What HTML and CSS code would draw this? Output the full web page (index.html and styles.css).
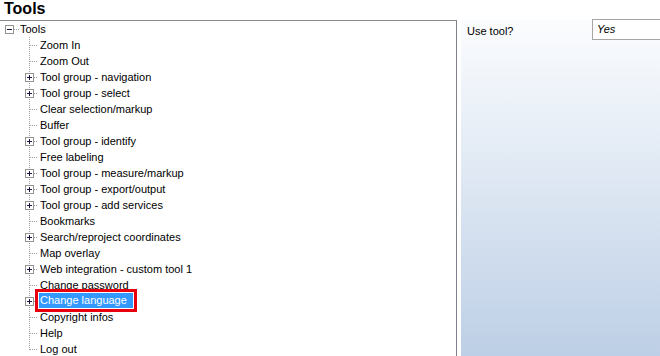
FILE: index.html
```html
<!DOCTYPE html>
<html>
<head>
<meta charset="utf-8">
<title>Tools</title>
<link rel="stylesheet" href="styles.css">
</head>
<body>
<div class="title">Tools</div>
<div class="main">
  <div class="tree">
    <div class="row root"><span class="rgutter"><span class="exp minus"></span></span><span class="label">Tools</span></div>
    <div class="row"><span class="gutter"></span><span class="label">Zoom In</span></div>
    <div class="row"><span class="gutter"></span><span class="label">Zoom Out</span></div>
    <div class="row"><span class="gutter"><span class="exp"></span></span><span class="label">Tool group - navigation</span></div>
    <div class="row"><span class="gutter"><span class="exp"></span></span><span class="label">Tool group - select</span></div>
    <div class="row"><span class="gutter"></span><span class="label">Clear selection/markup</span></div>
    <div class="row"><span class="gutter"></span><span class="label">Buffer</span></div>
    <div class="row"><span class="gutter"><span class="exp"></span></span><span class="label">Tool group - identify</span></div>
    <div class="row"><span class="gutter"></span><span class="label">Free labeling</span></div>
    <div class="row"><span class="gutter"><span class="exp"></span></span><span class="label">Tool group - measure/markup</span></div>
    <div class="row"><span class="gutter"><span class="exp"></span></span><span class="label">Tool group - export/output</span></div>
    <div class="row"><span class="gutter"><span class="exp"></span></span><span class="label">Tool group - add services</span></div>
    <div class="row"><span class="gutter"></span><span class="label">Bookmarks</span></div>
    <div class="row"><span class="gutter"><span class="exp"></span></span><span class="label">Search/reproject coordinates</span></div>
    <div class="row"><span class="gutter"></span><span class="label">Map overlay</span></div>
    <div class="row"><span class="gutter"><span class="exp"></span></span><span class="label">Web integration - custom tool 1</span></div>
    <div class="row"><span class="gutter"></span><span class="label">Change password</span></div>
    <div class="row"><span class="gutter"><span class="exp"></span></span><span class="label sel">Change language</span></div>
    <div class="row"><span class="gutter"></span><span class="label">Copyright infos</span></div>
    <div class="row"><span class="gutter"></span><span class="label">Help</span></div>
    <div class="row"><span class="gutter last"></span><span class="label">Log out</span></div>
  </div>
  <div class="props">
    <div class="prop">
      <span class="plabel">Use tool?</span>
      <span class="pvalue">Yes</span>
    </div>
  </div>
</div>
</body>
</html>
```
FILE: styles.css
```css
html, body {
  margin: 0;
  padding: 0;
  background: #fff;
  overflow: hidden;
}
body {
  width: 660px;
  height: 356px;
  font-family: "Liberation Sans", Arial, sans-serif;
  font-size: 11px;
  color: #000;
}
.title {
  height: 20px;
  padding-left: 4px;
  font-size: 16px;
  font-weight: bold;
  line-height: 18px;
}
.main {
  display: flex;
  height: 336px;
}
.tree {
  width: 456px;
  flex: none;
  border-top: 1px solid #8a8a8a;
  border-right: 1px solid #80808a;
  box-sizing: content-box;
  height: 335px;
  overflow: hidden;
}
.row {
  display: flex;
  height: 16px;
  line-height: 16px;
  white-space: nowrap;
}
.rgutter {
  width: 20px;
  height: 16px;
  flex: none;
  display: flex;
  align-items: center;
  padding-left: 5px;
  box-sizing: border-box;
  background: repeating-linear-gradient(to right, #a0a0a0 0 1px, transparent 1px 2px) 14px 8px / 5px 1px no-repeat;
}
.gutter {
  width: 40px;
  height: 16px;
  flex: none;
  display: flex;
  align-items: center;
  padding-left: 25px;
  box-sizing: border-box;
  background:
    repeating-linear-gradient(to right, #a0a0a0 0 1px, transparent 1px 2px) 30px 8px / 8px 1px no-repeat,
    repeating-linear-gradient(to bottom, #a0a0a0 0 1px, transparent 1px 2px) 29px 0 / 1px 16px no-repeat;
}
.gutter.last {
  background:
    repeating-linear-gradient(to right, #a0a0a0 0 1px, transparent 1px 2px) 30px 8px / 8px 1px no-repeat,
    repeating-linear-gradient(to bottom, #a0a0a0 0 1px, transparent 1px 2px) 29px 0 / 1px 9px no-repeat;
}
.exp {
  width: 9px;
  height: 9px;
  box-sizing: border-box;
  border: 1px solid #939393;
  background:
    linear-gradient(#1a1a40, #1a1a40) 1px 3px / 5px 1px no-repeat,
    linear-gradient(#1a1a40, #1a1a40) 3px 1px / 1px 5px no-repeat,
    #fff;
}
.exp.minus {
  background:
    linear-gradient(#1a1a40, #1a1a40) 1px 3px / 5px 1px no-repeat,
    #fff;
}
.label {
  display: inline-block;
  height: 16px;
}
.sel {
  height: 15px;
  line-height: 15px;
  margin-left: -1px;
  padding: 0 6px 0 1px;
  background: #3399ff;
  color: #fff;
  outline: 3px solid #e8000e;
  outline-offset: 1px;
}
.props {
  flex: 1;
  margin-left: 4px;
  background: linear-gradient(to bottom, #fbfcfe 0%, #e6edf6 35%, #bdcfe6 100%);
}
.prop {
  display: flex;
  align-items: flex-start;
  padding-left: 6px;
}
.plabel {
  width: 125px;
  flex: none;
  line-height: 22px;
}
.pvalue {
  flex: 1;
  height: 21px;
  box-sizing: border-box;
  border: 1px solid #a5a5a5;
  border-right: none;
  background: #fff;
  font-style: italic;
  line-height: 19px;
  padding-left: 4px;
  margin-top: -1px;
}
```
